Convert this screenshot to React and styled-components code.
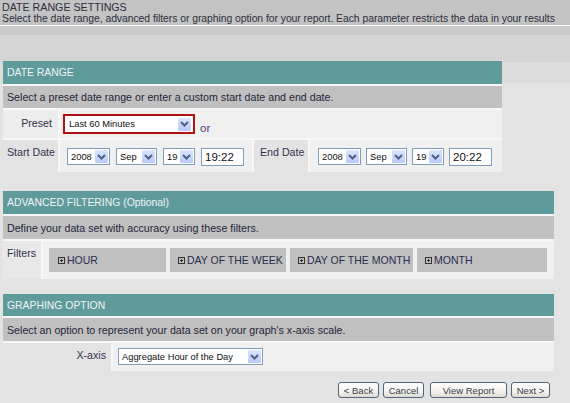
import styled, { createGlobalStyle } from "styled-components"

const GlobalStyle = createGlobalStyle`
    html, body {
        margin: 0;
        padding: 0;
    }
    body {
        font-family: "Liberation Sans", Arial, sans-serif;
        font-size: 10.67px;
        color: #333;
    }
`

// Page and top bar
const Page = styled.div`
    width: 570px;
    min-height: 403px;
    overflow: hidden;
    background: linear-gradient(to bottom, #cbcbcb 0, #cbcbcb 35px, #d5d5d5 35px, #d5d5d5 62px, #dcdcdc 62px, #dcdcdc 83px, #e3e3e3 83px);
`
const TopBar = styled.div`
    background-color: #c3c3c3;
    border-bottom: 1px solid #ffffff;
    height: 26px;
    padding-left: 2px;
    box-sizing: border-box;
    padding-top: 1px;
    line-height: 12px;
    color: #2e2e3e;
    white-space: nowrap;
`
const Subtitle = styled.div`
    font-size: 10.4px;
    letter-spacing: -0.05px;
`
const Body = styled.div`
    padding-left: 3px;
    display: flex;
    flex-direction: column;
`

// Panels
const Panel = styled.div`
    width: ${(p) => p.$width}px;
    margin-top: ${(p) => p.$mt}px;
    background-color: #f7f7f7;
    display: flex;
    flex-direction: column;
    gap: 2px;
`
const PanelHeader = styled.div`
    height: ${(p) => p.$h || 23}px;
    background-color: #5f9b9b;
    color: #f2f4f4;
    font-size: 10.4px;
    display: flex;
    align-items: center;
    padding-left: 4px;
`
const PanelDesc = styled.div`
    height: ${(p) => p.$h || 23}px;
    background-color: #c0c0c0;
    color: #25253a;
    display: flex;
    align-items: center;
    padding-left: 4px;
`
const Row = styled.div`
    height: ${(p) => p.$h}px;
    display: flex;
    gap: 2px;
`
const LabelCell = styled.div`
    width: ${(p) => p.$w}px;
    flex: none;
    box-sizing: border-box;
    background-color: ${(p) => p.$bg || "#e3e3e3"};
    color: #34334f;
    text-align: ${(p) => (p.$right ? "right" : "left")};
    padding: ${(p) => p.$pad};
    white-space: nowrap;
`
const ContentCell = styled.div`
    flex: ${(p) => (p.$w ? "none" : "1")};
    width: ${(p) => (p.$w ? `${p.$w}px` : "auto")};
    box-sizing: border-box;
    background-color: #f0f0f0;
    display: flex;
    align-items: flex-start;
    gap: ${(p) => p.$gap || 0}px;
    padding: ${(p) => p.$pad};
`

// Form controls
const RedFrame = styled.div`
    border: 2px solid #b40f0f;
    display: flex;
`
const SelectBox = styled.div`
    width: ${(p) => p.$w}px;
    height: ${(p) => p.$h || 17}px;
    flex: none;
    box-sizing: border-box;
    border: 1px solid ${(p) => (p.$plain ? "#ffffff" : "#7f9db9")};
    background-color: #ffffff;
    display: flex;
    align-items: center;
    justify-content: space-between;
    padding-left: 3px;
    color: #111;
    font-size: 9.33px;
    white-space: nowrap;
    overflow: hidden;
`
const Arrow = styled.span`
    width: 13px;
    height: 13px;
    flex: none;
    margin: 1px;
    border-radius: 1px;
    background: linear-gradient(to bottom, #dce6fe, #b9c9f8);
    display: flex;
    align-items: center;
    justify-content: center;
`
const TimeInput = styled.div`
    width: 43px;
    height: 18px;
    flex: none;
    box-sizing: border-box;
    border: 1px solid #7f9db9;
    background-color: #ffffff;
    font-size: 11.5px;
    line-height: 17px;
    padding-left: 3px;
    color: #111;
`
const OrText = styled.span`
    color: #4e3a78;
    margin-left: 5px;
    margin-top: 8px;
    font-size: 11.5px;
`

// Filters
const FilterButton = styled.div`
    width: ${(p) => p.$w}px;
    height: 24px;
    flex: none;
    box-sizing: border-box;
    background-color: #c0c0c0;
    display: flex;
    align-items: center;
    padding-left: ${(p) => p.$pl || 9}px;
    gap: 2px;
    color: #2d2d50;
    font-size: 10.5px;
    white-space: nowrap;
`
const PlusBox = styled.span`
    width: 7px;
    height: 7px;
    box-sizing: border-box;
    border: 1px solid #333;
    position: relative;
    margin-top: 1px;
    &::before {
        content: "";
        position: absolute;
        left: 1px;
        top: 2px;
        width: 3px;
        height: 1px;
        background: #333;
    }
    &::after {
        content: "";
        position: absolute;
        left: 2px;
        top: 1px;
        width: 1px;
        height: 3px;
        background: #333;
    }
`

// Bottom buttons
const ButtonBar = styled.div`
    width: 547px;
    margin-top: 11px;
    display: flex;
    justify-content: flex-end;
    gap: 4px;
`
const Button = styled.button`
    width: ${(p) => p.$w}px;
    height: 16px;
    margin-left: ${(p) => p.$ml || 0}px;
    padding: 0;
    box-sizing: border-box;
    border: 1px solid #53657a;
    border-radius: 3px;
    background: linear-gradient(to bottom, #ffffff 0%, #f3f2ee 60%, #dedbd2 100%);
    font-family: "Liberation Sans", Arial, sans-serif;
    font-size: 9.5px;
    color: #3a3a4a;
    line-height: 13px;
`

function Chevron() {
    return (
        <svg width="9" height="6" viewBox="0 0 9 6">
            <path d="M1 1 L4.5 4.5 L8 1" fill="none" stroke="#4d6185" strokeWidth="2" />
        </svg>
    )
}

function Select({ value, w, h, plain }) {
    return (
        <SelectBox $w={w} $h={h} $plain={plain}>
            <span>{value}</span>
            <Arrow>
                <Chevron />
            </Arrow>
        </SelectBox>
    )
}

function DateFields({ time }) {
    return (
        <>
            <Select value="2008" w={43} />
            <Select value="Sep" w={41} />
            <Select value="19" w={32} />
            <TimeInput>{time}</TimeInput>
        </>
    )
}

const filters = [
    { name: "HOUR", w: 117, pl: 9 },
    { name: "DAY OF THE WEEK", w: 116, pl: 8 },
    { name: "DAY OF THE MONTH", w: 123, pl: 8 },
    { name: "MONTH", w: 130, pl: 8 },
]

export default function App() {
    return (
        <Page>
            <GlobalStyle />
            <TopBar>
                <div>DATE RANGE SETTINGS</div>
                <Subtitle>Select the date range, advanced filters or graphing option for your report. Each parameter restricts the data in your results</Subtitle>
            </TopBar>
            <Body>
                <Panel $width={499} $mt={35}>
                    <PanelHeader>DATE RANGE</PanelHeader>
                    <PanelDesc $h={22}>Select a preset date range or enter a custom start date and end date.</PanelDesc>
                    <Row $h={28}>
                        <LabelCell $w={55} $bg="#ececec" $right $pad="7px 6px 0 0">Preset</LabelCell>
                        <ContentCell $pad="4px 0 0 3px">
                            <RedFrame>
                                <Select value="Last 60 Minutes" w={128} h={16} plain />
                            </RedFrame>
                            <OrText>or</OrText>
                        </ContentCell>
                    </Row>
                    <Row $h={32}>
                        <LabelCell $w={55} $pad="6px 0 0 4px">Start Date</LabelCell>
                        <ContentCell $w={192} $gap={6} $pad="8px 0 0 7px">
                            <DateFields time="19:22" />
                        </ContentCell>
                        <LabelCell $w={54} $pad="6px 0 0 6px">End Date</LabelCell>
                        <ContentCell $gap={5} $pad="8px 0 0 8px">
                            <DateFields time="20:22" />
                        </ContentCell>
                    </Row>
                </Panel>

                <Panel $width={551} $mt={19}>
                    <PanelHeader>ADVANCED FILTERING (Optional)</PanelHeader>
                    <PanelDesc>Define your data set with accuracy using these filters.</PanelDesc>
                    <Row $h={38}>
                        <LabelCell $w={38} $bg="#e8e8e8" $pad="6px 0 0 4px">Filters</LabelCell>
                        <ContentCell $gap={4} $pad="7px 0 0 6px">
                            {filters.map((f) => (
                                <FilterButton key={f.name} $w={f.w} $pl={f.pl}>
                                    <PlusBox />
                                    {f.name}
                                </FilterButton>
                            ))}
                        </ContentCell>
                    </Row>
                </Panel>

                <Panel $width={551} $mt={15}>
                    <PanelHeader $h={22}>GRAPHING OPTION</PanelHeader>
                    <PanelDesc>Select an option to represent your data set on your graph's x-axis scale.</PanelDesc>
                    <Row $h={28}>
                        <LabelCell $w={108} $right $pad="6px 5px 0 0">X-axis</LabelCell>
                        <ContentCell $pad="5px 0 0 5px">
                            <Select value="Aggregate Hour of the Day" w={145} />
                        </ContentCell>
                    </Row>
                </Panel>

                <ButtonBar>
                    <Button $w={41}>&lt; Back</Button>
                    <Button $w={41}>Cancel</Button>
                    <Button $w={77} $ml={2}>View Report</Button>
                    <Button $w={39}>Next &gt;</Button>
                </ButtonBar>
            </Body>
        </Page>
    )
}
